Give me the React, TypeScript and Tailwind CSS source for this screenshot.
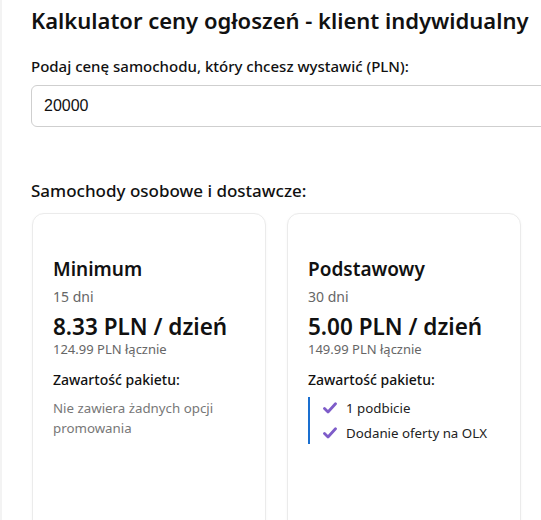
const Check = () => (
  <svg width="14" height="12" viewBox="0 0 14 12" className="shrink-0">
    <path d="M1.5 6.5 L5 10 L12.5 1.8" fill="none" stroke="#7e5cc9" strokeWidth="2.8" strokeLinecap="round" strokeLinejoin="round" />
  </svg>
);

type Plan = {
  name: string;
  days: string;
  perDay: string;
  total: string;
  items: string[];
};

const plans: Plan[] = [
  { name: "Minimum", days: "15 dni", perDay: "8.33 PLN / dzień", total: "124.99 PLN łącznie", items: [] },
  { name: "Podstawowy", days: "30 dni", perDay: "5.00 PLN / dzień", total: "149.99 PLN łącznie", items: ["1 podbicie", "Dodanie oferty na OLX"] },
];

const cardBase = "w-[234px] h-[330px] shrink-0 rounded-xl border border-[#ebebeb] bg-white shadow-[0_1px_3px_rgba(0,0,0,0.04)]";

const PlanCard = ({ plan }: { plan: Plan }) => (
  <div className={`${cardBase} px-[20px] pt-[42px]`}>
    <div className="text-[19px] leading-[26px] font-semibold text-[#111]">{plan.name}</div>
    <div className="text-[14px] leading-[18px] text-[#666] mt-[6px]">{plan.days}</div>
    <div className="text-[22.5px] leading-[26px] font-semibold text-[#111] mt-[8px]">{plan.perDay}</div>
    <div className="text-[13px] leading-[18px] text-[#666]">{plan.total}</div>
    <div className="text-[14px] leading-[20px] font-medium text-[#111] mt-[12px]">Zawartość pakietu:</div>
    {plan.items.length === 0 ? (
      <div className="text-[13.3px] leading-[20px] text-[#777] mt-[8px]">Nie zawiera żadnych opcji promowania</div>
    ) : (
      <ul className="mt-[7px] border-l-2 border-[#1a6fd0] pl-[13px] flex flex-col gap-[5px] py-[1px]">
        {plan.items.map((it) => (
          <li key={it} className="flex items-center gap-[9px] text-[13.3px] leading-[20px] text-[#222]">
            <Check />
            {it}
          </li>
        ))}
      </ul>
    )}
  </div>
);

export default function App() {
  return (
    <div className="w-[541px] h-[520px] overflow-hidden bg-white border-l-2 border-[#f3f3f3]" style={{ fontFamily: '"Noto Sans", "Open Sans", sans-serif' }}>
      <div className="w-[800px] pl-[29px] pt-[4px]">
        <h1 className="text-[22px] leading-[32px] font-semibold text-[#111]">Kalkulator ceny ogłoszeń - klient indywidualny</h1>
        <label className="block text-[15px] leading-[20px] font-medium text-[#111] mt-[20px]">Podaj cenę samochodu, który chcesz wystawić (PLN):</label>
        <input
          readOnly
          value="20000"
          className="block mt-[9px] w-[700px] h-[42px] rounded-md border border-[#cfcfcf] px-[12px] text-[16px] text-[#111] outline-none"
          style={{ fontFamily: '"Liberation Sans", Arial, sans-serif' }}
        />
        <h2 className="text-[17px] leading-[24px] font-medium text-[#111] mt-[52px]">Samochody osobowe i dostawcze:</h2>
        <div className="flex gap-[21px] mt-[10px] ml-[1px]">
          {plans.map((p) => (
            <PlanCard key={p.name} plan={p} />
          ))}
          <div className={cardBase} />
        </div>
      </div>
    </div>
  );
}
